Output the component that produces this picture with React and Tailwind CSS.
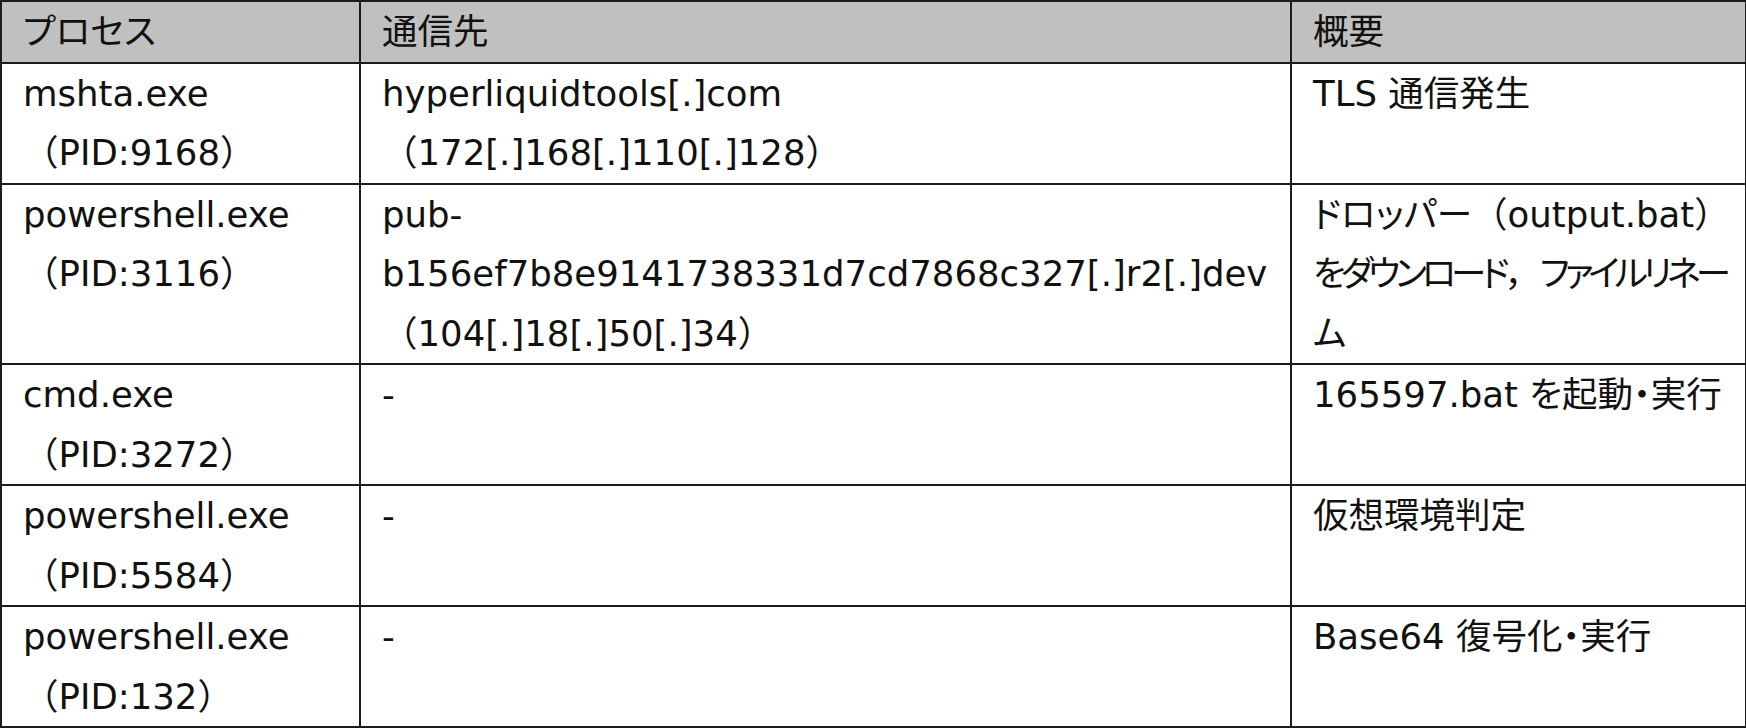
import React from 'react';

const kana = "[font-feature-settings:'palt']";

const rows = [
  {
    proc: ['mshta.exe', '（PID:9168）'],
    dest: ['hyperliquidtools[.]com', '（172[.]168[.]110[.]128）'],
    note: [<>TLS 通信発生</>],
  },
  {
    proc: ['powershell.exe', '（PID:3116）'],
    dest: ['pub-', 'b156ef7b8e9141738331d7cd7868c327[.]r2[.]dev', '（104[.]18[.]50[.]34）'],
    note: [
      <>
        <span className={kana}>ドロッパー</span>（output.bat）
      </>,
      <>
        <span className={`${kana} tracking-[-5px]`}>をダウンロード</span>，
        <span className={`${kana} tracking-[-5px]`}>ファイルリネー</span>
      </>,
      <span className={kana}>ム</span>,
    ],
  },
  {
    proc: ['cmd.exe', '（PID:3272）'],
    dest: ['-'],
    note: [<>165597.bat <span className={kana}>を</span>起動<span className={kana}>・</span>実行</>],
  },
  {
    proc: ['powershell.exe', '（PID:5584）'],
    dest: ['-'],
    note: [<>仮想環境判定</>],
  },
  {
    proc: ['powershell.exe', '（PID:132）'],
    dest: ['-'],
    note: [<>Base64 復号化<span className={kana}>・</span>実行</>],
  },
];

function Lines({ items }) {
  return items.map((line, i) => (
    <div key={i} className="whitespace-nowrap">
      {line}
    </div>
  ));
}

export default function App() {
  const cell = 'border-2 border-[#1c1c1c] align-top pl-[21px] pr-2 py-0';
  return (
    <div className="w-[1746px] h-[728px] bg-white text-[#111] font-['DejaVu_Sans','Noto_Sans_CJK_JP',sans-serif] text-[35.5px] leading-[59.5px]">
      <table className="border-collapse table-fixed w-[1745px]">
        <colgroup>
          <col className="w-[359px]" />
          <col className="w-[931px]" />
          <col className="w-[455px]" />
        </colgroup>
        <thead>
          <tr className="bg-[#c0c0c0]">
            <th className={`${cell} text-left font-normal`}>
              <span className={kana}>プロセス</span>
            </th>
            <th className={`${cell} text-left font-normal`}>通信先</th>
            <th className={`${cell} text-left font-normal`}>概要</th>
          </tr>
        </thead>
        <tbody>
          {rows.map((r, i) => (
            <tr key={i}>
              <td className={cell}>
                <Lines items={r.proc} />
              </td>
              <td className={cell}>
                <Lines items={r.dest} />
              </td>
              <td className={cell}>
                <Lines items={r.note} />
              </td>
            </tr>
          ))}
        </tbody>
      </table>
    </div>
  );
}
